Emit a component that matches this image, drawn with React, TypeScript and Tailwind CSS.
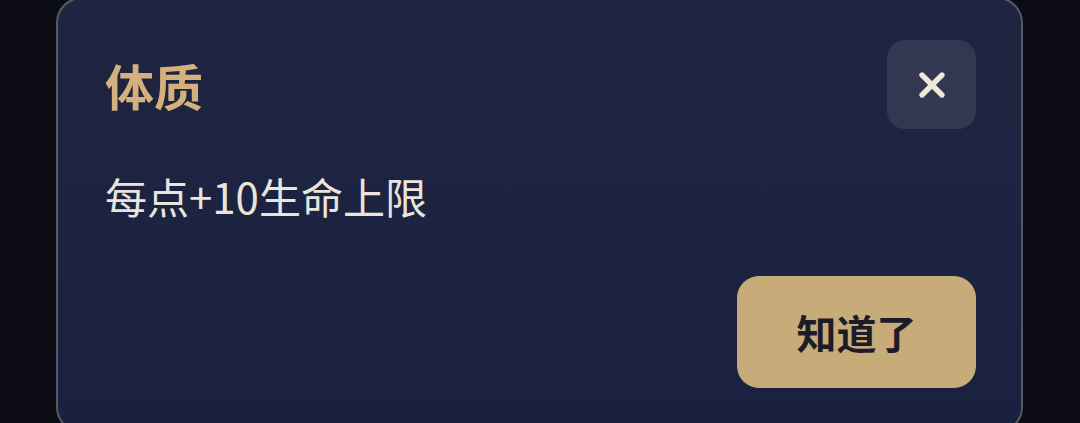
import { X } from 'lucide-react'

export default function App() {
  return (
    <div
      className="h-[423px] w-[1080px] overflow-hidden bg-[#0c0d14] pl-[56px] pr-[57px]"
      style={{ fontFamily: '"Noto Sans CJK SC", "Noto Sans", sans-serif' }}
    >
      <div className="-mt-[3px] h-[436px] rounded-[26px] border-2 border-[#555a67] bg-gradient-to-b from-[#1f2540] to-[#1a2140] pl-[47px] pr-[45px] pt-[41px]">
        <div className="flex items-center justify-between">
          <h1 className="text-[49px] font-semibold leading-none text-[#d3b07c]">体质</h1>
          <button className="flex h-[89px] w-[89px] items-center justify-center rounded-[18px] bg-[#323851]">
            <X className="h-[40px] w-[40px] text-[#ede7d9]" strokeWidth={3.2} />
          </button>
        </div>

        <p className="mt-[40px] text-[42px] leading-[1.3] text-[#e9e5dd]">每点+10生命上限</p>

        <div className="mt-[52px] flex justify-end">
          <button className="flex h-[112px] w-[239px] items-center justify-center rounded-[22px] bg-[#c7ab78] text-[40px] font-semibold text-[#1d1d2a]">
            知道了
          </button>
        </div>
      </div>
    </div>
  )
}
